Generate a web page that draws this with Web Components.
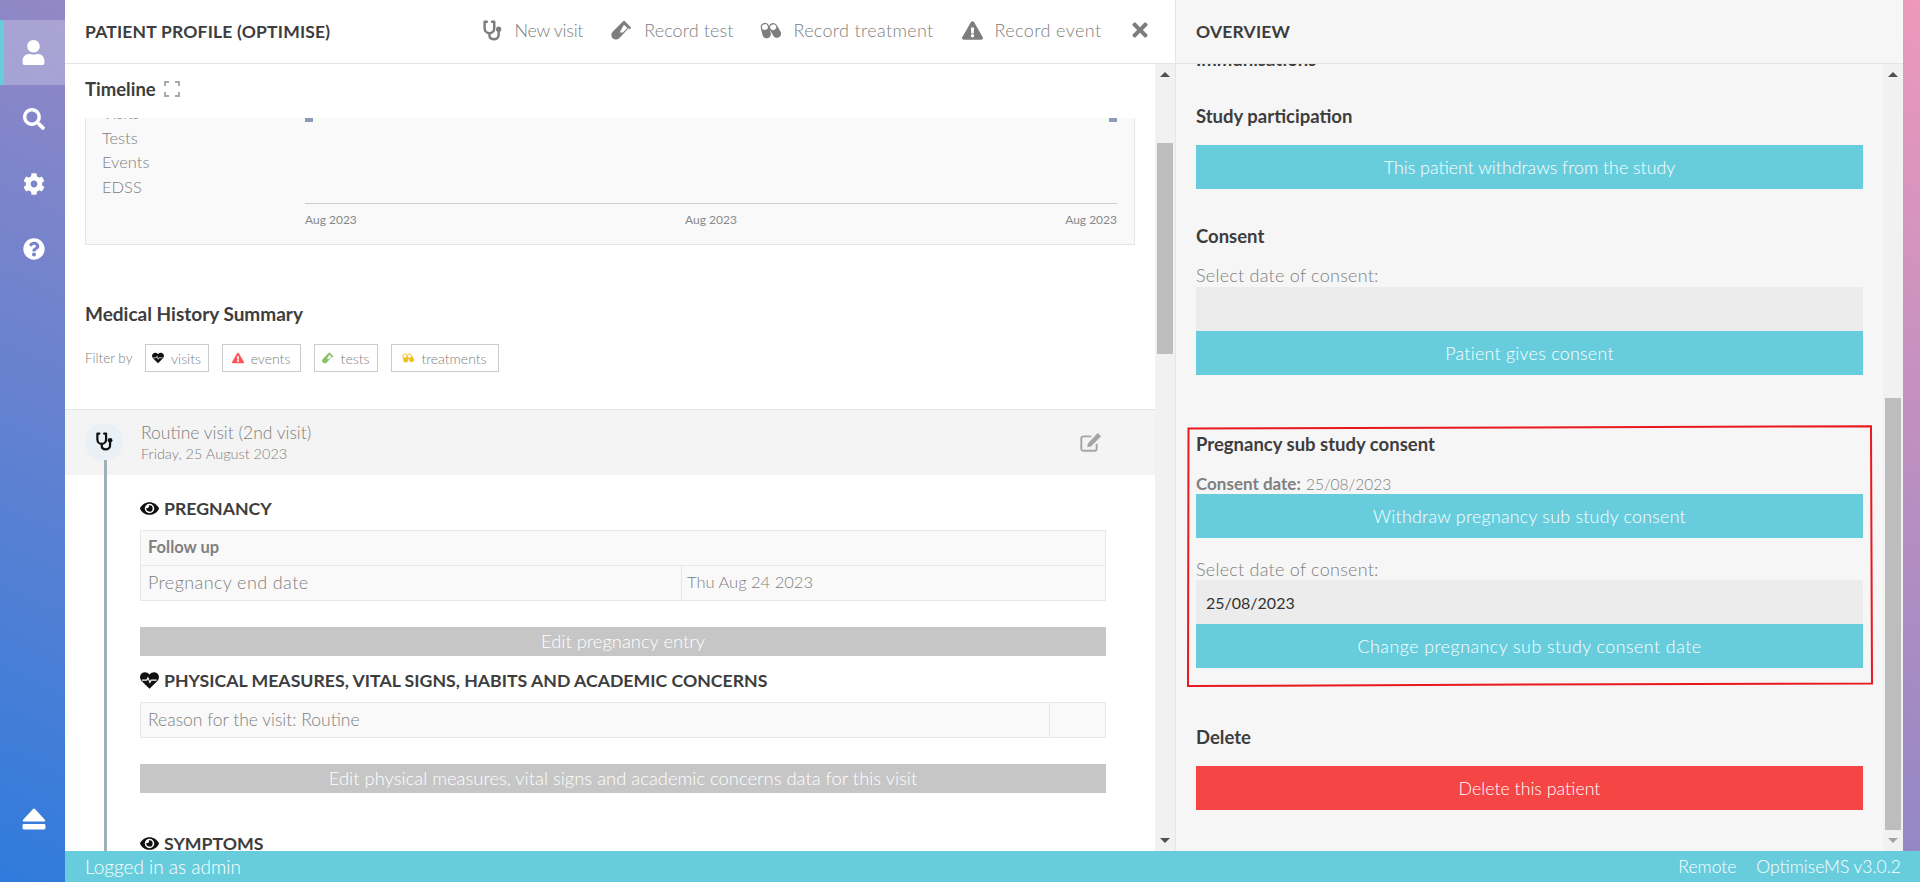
<!DOCTYPE html>
<html>
<head>
<meta charset="utf-8">
<title>Patient profile</title>
<style>
  html, body { margin: 0; height: 882px; overflow: hidden; }
  body {
    font-family: "Lato", "Open Sans", sans-serif;
    font-size: 15px;
    font-weight: 300;
    color: #808080;
    background: linear-gradient(to top right, #2f7bdc, #9087c6 50%, #ee98bb);
  }
  #app { display: grid; grid-template-columns: 65px 1fr; grid-template-rows: 851px 31px; height: 882px; }
  opt-sidebar { grid-row: 1 / 3; }
  #panels { display: flex; min-height: 0; }
  opt-status-bar { grid-column: 2; }
</style>
</head>
<body>
<div id="app">
  <opt-sidebar></opt-sidebar>
  <div id="panels">
    <opt-patient-panel></opt-patient-panel>
    <opt-overview-panel></opt-overview-panel>
  </div>
  <opt-status-bar></opt-status-bar>
</div>

<script>
const ICONS = {
  user: ['0 0 448 512', '<path d="M224 256c70.7 0 128-57.3 128-128S294.7 0 224 0 96 57.3 96 128s57.3 128 128 128zm89.6 32h-16.7c-22.2 10.2-46.9 16-72.9 16s-50.6-5.8-72.9-16h-16.7C60.2 288 0 348.2 0 422.4V464c0 26.5 21.5 48 48 48h352c26.5 0 48-21.5 48-48v-41.6c0-74.2-60.2-134.4-134.4-134.4z"/>'],
  search: ['0 0 512 512', '<path d="M505 442.7L405.3 343c-4.5-4.5-10.6-7-17-7H372c27.6-35.3 44-79.7 44-128C416 93.1 322.9 0 208 0S0 93.1 0 208s93.1 208 208 208c48.3 0 92.7-16.4 128-44v16.3c0 6.4 2.5 12.5 7 17l99.7 99.7c9.4 9.4 24.6 9.4 33.9 0l28.3-28.3c9.4-9.4 9.4-24.6.1-34zM208 336c-70.7 0-128-57.2-128-128 0-70.7 57.2-128 128-128 70.7 0 128 57.2 128 128 0 70.7-57.2 128-128 128z"/>'],
  cog: ['0 0 512 512', '<path d="M487.4 315.7l-42.6-24.6c4.3-23.2 4.3-47 0-70.2l42.6-24.6c4.9-2.8 7.1-8.6 5.5-14-11.1-35.6-30-67.8-54.7-94.6-3.8-4.1-10-5.1-14.8-2.3L380.8 110c-17.9-15.4-38.5-27.3-60.8-35.1V25.8c0-5.6-3.9-10.5-9.4-11.7-36.7-8.2-74.3-7.8-109.2 0-5.5 1.2-9.4 6.1-9.4 11.7V75c-22.2 7.9-42.8 19.8-60.8 35.1L88.7 85.5c-4.9-2.8-11-1.9-14.8 2.3-24.7 26.7-43.6 58.9-54.7 94.6-1.7 5.4.6 11.2 5.5 14L67.3 221c-4.3 23.2-4.3 47 0 70.2l-42.6 24.6c-4.9 2.8-7.1 8.6-5.5 14 11.1 35.6 30 67.8 54.7 94.6 3.8 4.1 10 5.1 14.8 2.3l42.6-24.6c17.9 15.4 38.5 27.3 60.8 35.1v49.2c0 5.6 3.9 10.5 9.4 11.7 36.7 8.2 74.3 7.8 109.2 0 5.5-1.2 9.4-6.1 9.4-11.7v-49.2c22.2-7.9 42.8-19.8 60.8-35.1l42.6 24.6c4.9 2.8 11 1.9 14.8-2.3 24.7-26.7 43.6-58.9 54.7-94.6 1.5-5.5-.7-11.3-5.6-14.1zM256 336c-44.1 0-80-35.9-80-80s35.9-80 80-80 80 35.9 80 80-35.9 80-80 80z"/>'],
  question: ['0 0 512 512', '<path d="M504 256c0 136.997-111.043 248-248 248S8 392.997 8 256C8 119.083 119.043 8 256 8s248 111.083 248 248zM262.655 90c-54.497 0-89.255 22.957-116.549 63.758-3.536 5.286-2.353 12.415 2.715 16.258l34.699 26.31c5.205 3.947 12.621 3.008 16.665-2.122 17.864-22.658 30.113-35.797 57.303-35.797 20.429 0 45.698 13.148 45.698 32.958 0 14.976-12.363 22.667-32.534 33.976C247.128 238.528 216 254.941 216 296v4c0 6.627 5.373 12 12 12h56c6.627 0 12-5.373 12-12v-1.333c0-28.462 83.186-29.647 83.186-106.667 0-58.002-60.165-102-116.531-102zM256 338c-25.365 0-46 20.635-46 46 0 25.364 20.635 46 46 46s46-20.636 46-46c0-25.365-20.635-46-46-46z"/>'],
  eject: ['0 0 448 448', '<path d="M224 30c9 0 17 4 23 11l180 196c12 14 3 35-16 35H37c-19 0-28-21-16-35L201 41c6-7 14-11 23-11z"/><rect x="10" y="318" width="428" height="100" rx="26"/>'],
  times: ['0 0 352 512', '<path d="M242.72 256l100.07-100.07c12.28-12.28 12.28-32.19 0-44.48l-22.24-22.24c-12.28-12.28-32.19-12.28-44.48 0L176 189.28 75.93 89.21c-12.28-12.28-32.19-12.28-44.48 0L9.21 111.45c-12.28 12.28-12.28 32.19 0 44.48L109.28 256 9.21 356.07c-12.28 12.28-12.28 32.19 0 44.48l22.24 22.24c12.28 12.28 32.2 12.28 44.48 0L176 322.72l100.07 100.07c12.28 12.28 32.2 12.28 44.48 0l22.24-22.24c12.28-12.28 12.28-32.19 0-44.48L242.72 256z"/>'],
  warning: ['0 0 576 512', '<path d="M569.517 440.013C587.975 472.007 564.806 512 527.94 512H48.054c-36.937 0-59.999-40.055-41.577-71.987L246.423 23.985c18.467-32.009 64.72-31.951 83.154 0l239.94 416.028zM288 354c-25.405 0-46 20.595-46 46s20.595 46 46 46 46-20.595 46-46-20.595-46-46-46zm-43.673-165.346l7.418 136c.347 6.364 5.609 11.346 11.982 11.346h48.546c6.373 0 11.635-4.982 11.982-11.346l7.418-136c.375-6.874-5.098-12.654-11.982-12.654h-63.383c-6.884 0-12.356 5.78-11.981 12.654z"/>'],
  eye: ['0 0 576 512', '<path d="M572.52 241.4C518.29 135.59 410.93 64 288 64S57.68 135.64 3.48 241.41a32.35 32.35 0 0 0 0 29.19C57.71 376.41 165.07 448 288 448s230.32-71.64 284.52-177.41a32.35 32.35 0 0 0 0-29.19zM288 400a144 144 0 1 1 144-144 143.93 143.93 0 0 1-144 144zm0-240a95.31 95.31 0 0 0-25.31 3.79 47.85 47.85 0 0 1-66.9 66.9A95.78 95.78 0 1 0 288 160z"/>'],
  stethoscope: ['0 0 24 24', '<path fill="none" stroke="currentColor" stroke-width="2.8" stroke-linecap="round" stroke-linejoin="round" d="M5.500 2H3v7c0 3.500 2.500 6 5.500 6s5.500-2.500 5.500-6V2h-2.500"/><path fill="none" stroke="currentColor" stroke-width="2.800" stroke-linecap="round" d="M8.500 15v2.500c0 2.800 2.200 4.500 5 4.500s5.500-1.700 5.500-4.500V13"/><circle cx="19" cy="10.500" r="3"/>'],
  vial: ['0 0 24 24', '<path d="M15.200 .8l8 8-1.700 1.700-1.400-1.200L9.400 20.800a5.300 5.300 0 0 1-7.500-7.500L13 2.200l-.2-.2z"/><path fill="#fff" d="M14.800 5.300l3.900 3.900-5 5H9.900z"/>'],
  pills: ['0 0 24 20', '<g transform="rotate(-14 7 10)"><rect x="1.800" y="1" width="9.600" height="18" rx="4.800"/><rect x="3.200" y="2.600" width="6.800" height="6.400" rx="3" fill="#fff"/></g><g transform="rotate(-30 17 10)"><rect x="12.400" y="1" width="9.600" height="18" rx="4.800"/><rect x="13.800" y="2.600" width="6.800" height="6.400" rx="3" fill="#fff"/></g>'],
  heartbeat: ['0 0 24 22', '<path d="M12 21.500L2 11.500C-.8 8.500-.5 4 2.500 1.800c2.800-2 6.800-1.500 9.500 1.700 2.700-3.200 6.700-3.700 9.500-1.700 3 2.200 3.300 6.700.5 9.700z"/><path fill="none" stroke="#fff" stroke-width="1.400" d="M2.500 10.500h6l1.500-3 2.500 6 1.500-3h7"/>'],
  edit: ['0 0 24 22', '<path fill="none" stroke="currentColor" stroke-width="2.200" d="M19 12.500V18a2.500 2.500 0 0 1-2.500 2.500H4A2.500 2.500 0 0 1 1.500 18V6.500A2.500 2.500 0 0 1 4 4h9"/><path d="M21 .8l2.400 2.400a1 1 0 0 1 0 1.400L12.500 15.500l-4.300.8.800-4.300L19.600.8a1 1 0 0 1 1.400 0z"/>'],
  expand: ['0 0 16 16', '<path fill="none" stroke="currentColor" stroke-width="2" d="M1 5V1h4M11 1h4v4M15 11v4h-4M5 15H1v-4"/>']
};

function svgIcon(name, size, color) {
  const [box, body] = ICONS[name];
  return `<svg viewBox="${box}" width="${size}" height="${size}" fill="currentColor" style="color:${color};display:block;flex:none">${body}</svg>`;
}

class OptSidebar extends HTMLElement {
  constructor() {
    super();
    this.attachShadow({mode: "open"}).innerHTML = `
    <style>
      :host { display: flex; flex-direction: column; height: 882px; padding-top: 20px; box-sizing: border-box; }
      .item { height: 65px; display: flex; align-items: center; justify-content: center; padding-left: 2px; }
      .on { background: rgba(255,255,255,.24); box-shadow: inset 4px 0 0 #67cddd; margin-bottom: 1.500px; }
      .push { margin-top: auto; margin-bottom: 31px; height: 65px; }
    </style>
    <div class="item on">${svgIcon("user", 25, "#fff")}</div>
    <div class="item">${svgIcon("search", 22, "#fff")}</div>
    <div class="item">${svgIcon("cog", 22, "#fff")}</div>
    <div class="item">${svgIcon("question", 22, "#fff")}</div>
    <div class="item push">${svgIcon("eject", 24, "#fff")}</div>`;
  }
}

class OptPanelHead extends HTMLElement {
  constructor() {
    super();
    this.attachShadow({mode: "open"}).innerHTML = `
    <style>
      :host { display: flex; align-items: center; height: 63px; flex: none; border-bottom: 1px solid #e5e5e5; padding-left: 20px; }
      .t { font-size: 17.500px; font-weight: 700; color: #3d3d3d; letter-spacing: .2px; }
      .r { margin-left: auto; margin-bottom: 3px; display: flex; align-items: center; }
    </style>
    <div class="t"><slot name="title"></slot></div>
    <div class="r"><slot></slot></div>`;
  }
}

class OptAction extends HTMLElement {
  constructor() {
    super();
    const icon = this.getAttribute("icon");
    const size = this.getAttribute("size") || 21;
    this.attachShadow({mode: "open"}).innerHTML = `
    <style>
      :host { display: flex; align-items: center; gap: 12px; margin-left: 28px; font-size: 18px; color: #808080; }
    </style>
    ${svgIcon(icon, size, "#7d7d7d")}<span><slot></slot></span>`;
  }
}

class OptScrollTrack extends HTMLElement {
  constructor() {
    super();
    const top = this.getAttribute("top");
    const height = this.getAttribute("thumb");
    const fade = this.hasAttribute("fade");
    this.attachShadow({mode: "open"}).innerHTML = `
    <style>
      :host { display: flex; flex-direction: column; width: 20px; flex: none; background: #f1f1f1; position: relative; box-sizing: border-box; padding: 0 2px; }
      .up, .down { position: absolute; left: 5px; width: 0; height: 0; border-left: 5px solid transparent; border-right: 5px solid transparent; }
      .up { top: 8px; border-bottom: 5px solid #505050; }
      .down { bottom: 8px; border-top: 5px solid ${fade ? "#a3a3a3" : "#505050"}; }
      .thumb { background: #bdbdbd; height: ${height}px; margin-top: ${top}px; }
    </style>
    <div class="up"></div><div class="thumb"></div><div class="down"></div>`;
  }
}

class OptTimeline extends HTMLElement {
  constructor() {
    super();
    this.attachShadow({mode: "open"}).innerHTML = `
    <style>
      :host { display: grid; grid-template-columns: 219px 1fr; height: 127px; box-sizing: border-box; background: #f9f9f9; margin-right: 20px;
        border: solid #e5e5e5; border-width: 0 1px 1px 1px; overflow: hidden; }
      .labels { padding-left: 16px; margin-top: -17px; font-size: 16.500px; line-height: 24.500px; color: #808080; }
      .plot { position: relative; margin-right: 17px; display: flex; flex-direction: column; }
      .marks { display: flex; justify-content: space-between; height: 85px; border-bottom: 1px solid #ccc; }
      .marks i { width: 8px; height: 4px; background: #8c9bb5; }
      .axis { display: flex; justify-content: space-between; font-size: 12px; font-weight: 400; color: #888; margin-top: 8px; }
    </style>
    <div class="labels"><div>Visits</div><div>Tests</div><div>Events</div><div>EDSS</div></div>
    <div class="plot">
      <div class="marks"><i></i><i></i></div>
      <div class="axis"><span>Aug 2023</span><span>Aug 2023</span><span>Aug 2023</span></div>
    </div>`;
  }
}

class OptFilterChip extends HTMLElement {
  constructor() {
    super();
    const icon = this.getAttribute("icon");
    const color = this.getAttribute("color");
    this.attachShadow({mode: "open"}).innerHTML = `
    <style>
      :host { display: flex; align-items: center; justify-content: center; height: 28px; box-sizing: border-box; border: 1px solid #ccc; gap: 7px; font-size: 14px; color: #808080; }
    </style>
    ${svgIcon(icon, 12, color)}<span><slot></slot></span>`;
  }
}

class OptSectionTitle extends HTMLElement {
  constructor() {
    super();
    this.attachShadow({mode: "open"}).innerHTML = `
    <style>
      :host { display: flex; align-items: center; gap: 5px; height: 24px; font-size: 17.700px; font-weight: 700; color: #3d3d3d; }
    </style>
    ${svgIcon(this.getAttribute("icon"), 19, "#111")}<span><slot></slot></span>`;
  }
}

class OptDataRow extends HTMLElement {
  constructor() {
    super();
    const split = this.getAttribute("split");
    this.attachShadow({mode: "open"}).innerHTML = `
    <style>
      :host { display: grid; grid-template-columns: ${split ? split + "px 1fr" : "1fr"}; height: 36px; box-sizing: border-box; border: 1px solid #e8e8e8; background: #f9f9f9; font-size: 17.500px; color: #808080; }
      :host([bold]) { font-weight: 700; font-size: 16.500px; }
      :host([joined]) { border-top: 0; height: 35px; }
      div { display: flex; align-items: center; padding: 0 0 2px 7px; }
      div + div { border-left: 1px solid #e8e8e8; padding-left: 5px; }
    </style>
    <div><slot></slot></div>${split ? '<div><slot name="value"></slot></div>' : ""}`;
  }
}

class OptWideButton extends HTMLElement {
  constructor() {
    super();
    this.attachShadow({mode: "open"}).innerHTML = `
    <style>
      :host { display: flex; align-items: center; justify-content: center; height: 44px; background: #67cddd; color: #fff; font-size: 17.800px; padding-bottom: 1px; box-sizing: border-box; }
      :host([danger]) { background: #f54545; }
      :host([muted]) { background: #c6c6c6; height: 29px; font-size: 18.400px; padding-bottom: 2px; }
    </style>
    <slot></slot>`;
  }
}

class OptVisitRow extends HTMLElement {
  constructor() {
    super();
    this.attachShadow({mode: "open"}).innerHTML = `
    <style>
      :host { display: flex; align-items: center; height: 66px; box-sizing: border-box; border-top: 1px solid #e5e5e5; background: #f4f4f4; padding-left: 20px; flex: none; }
      .node { width: 38px; height: 38px; border-radius: 50%; background: #e9f0f6; display: flex; align-items: center; justify-content: center; position: relative; margin: -2px 18px 0 0; }
      .node::after { content: ""; position: absolute; left: 19px; top: 37px; width: 3px; height: 20px; background: #a0b0bb; }
      .name { font-size: 17.500px; line-height: 20px; color: #808080; }
      .date { font-size: 14.500px; line-height: 18px; color: #808080; margin-top: 2px; }
      .edit { margin: 0 54px 0 auto; }
    </style>
    <div class="node">${svgIcon("stethoscope", 19, "#111")}</div>
    <div><div class="name"><slot></slot></div><div class="date"><slot name="date"></slot></div></div>
    <div class="edit">${svgIcon("edit", 21, "#a5a5a5")}</div>`;
  }
}

class OptPatientPanel extends HTMLElement {
  constructor() {
    super();
    this.attachShadow({mode: "open"}).innerHTML = `
    <style>
      :host { display: flex; flex-direction: column; width: 1111px; flex: none; background: #fff; box-sizing: border-box; border-right: 1px solid #e5e5e5; min-height: 0; }
      .below { display: flex; flex: 1; min-height: 0; }
      .scroll { flex: 1; min-width: 0; display: flex; flex-direction: column; overflow: hidden; }
      .stick { display: flex; align-items: center; gap: 8px; height: 54px; padding: 0 0 4px 20px; box-sizing: border-box; flex: none; font-size: 18.500px; font-weight: 700; color: #3d3d3d; }
      opt-timeline { margin-left: 20px; flex: none; }
      h3 { margin: 57px 0 0 20px; font-size: 19px; line-height: 24px; font-weight: 700; color: #3d3d3d; }
      .filters { display: flex; align-items: center; gap: 13px; height: 28px; margin: 18px 0 37px 20px; color: #808080; }
      .filters span { width: 46.500px; font-size: 13.500px; white-space: nowrap; }
      .body { flex: 1; display: flex; min-height: 0; overflow: hidden; }
      .rail { width: 3px; background: #a0b0bb; margin-left: 39px; flex: none; }
      .content { width: 966px; margin-left: 33px; padding-top: 21px; flex: none; }
      .d { font-size: 16.500px; }
      .wide { font-size: 18px; letter-spacing: .4px; }
    </style>
    <opt-panel-head>
      <span slot="title">PATIENT PROFILE (OPTIMISE)</span>
      <opt-action icon="stethoscope" style="letter-spacing:-.3px">New visit</opt-action>
      <opt-action icon="vial" style="letter-spacing:.1px">Record test</opt-action>
      <opt-action icon="pills" style="letter-spacing:.33px;margin-left:27px">Record treatment</opt-action>
      <opt-action icon="warning" style="letter-spacing:.4px">Record event</opt-action>
      <opt-action icon="times" size="22" style="margin:0 24.500px 0 27px;gap:0"></opt-action>
    </opt-panel-head>
    <div class="below">
      <div class="scroll">
        <div class="stick">Timeline ${svgIcon("expand", 16, "#aaa")}</div>
        <opt-timeline></opt-timeline>
        <h3>Medical History Summary</h3>
        <div class="filters">
          <span>Filter by</span>
          <opt-filter-chip icon="heartbeat" color="#111" style="width:64px">visits</opt-filter-chip>
          <opt-filter-chip icon="warning" color="#f55" style="width:79px">events</opt-filter-chip>
          <opt-filter-chip icon="vial" color="#8bc06b" style="width:64px">tests</opt-filter-chip>
          <opt-filter-chip icon="pills" color="#f6bd16" style="width:108px">treatments</opt-filter-chip>
        </div>
        <opt-visit-row>Routine visit (2nd visit)<span slot="date">Friday, 25 August 2023</span></opt-visit-row>
        <div class="body">
          <div class="rail"></div>
          <div class="content">
            <opt-section-title icon="eye">PREGNANCY</opt-section-title>
            <opt-data-row bold style="margin-top:10px">Follow up</opt-data-row>
            <opt-data-row joined split="540"><span class="wide">Pregnancy end date</span><span slot="value" class="d">Thu Aug 24 2023</span></opt-data-row>
            <opt-wide-button muted style="margin-top:26px">Edit pregnancy entry</opt-wide-button>
            <opt-section-title icon="heartbeat" style="margin-top:12px">PHYSICAL MEASURES, VITAL SIGNS, HABITS AND ACADEMIC CONCERNS</opt-section-title>
            <opt-data-row split="908" style="margin-top:10px">Reason for the visit: Routine<span slot="value"></span></opt-data-row>
            <opt-wide-button muted style="margin-top:26px">Edit physical measures, vital signs and academic concerns data for this visit</opt-wide-button>
            <opt-section-title icon="eye" style="margin-top:38px">SYMPTOMS</opt-section-title>
          </div>
        </div>
      </div>
      <opt-scroll-track top="79" thumb="211"></opt-scroll-track>
    </div>`;
  }
}

class OptAnnotation extends HTMLElement {
  constructor() {
    super();
    this.attachShadow({mode: "open"}).innerHTML = `
    <style>
      :host { position: absolute; left: 10px; top: 360px; width: 690px; height: 266px; pointer-events: none; }
      svg { display: block; }
    </style>
    <svg width="690" height="266" viewBox="0 0 690 266">
      <path d="M2.500 4.500L340 3.500L685 2.200L686 259.500L340 260.500L2 262z" fill="none" stroke="#e8191f" stroke-width="2"/>
    </svg>`;
  }
}

class OptOverviewPanel extends HTMLElement {
  constructor() {
    super();
    this.attachShadow({mode: "open"}).innerHTML = `
    <style>
      :host { display: flex; flex-direction: column; width: 727px; flex: none; background: #f6f6f6; min-height: 0; }
      .below { display: flex; flex: 1; min-height: 0; }
      .scroll { flex: 1; min-width: 0; padding: 0 20px; overflow: hidden; position: relative; }
      .inner { margin-top: -16px; }
      h4 { margin: 0; font-size: 18.500px; line-height: 22px; padding-bottom: 2px; font-weight: 700; color: #3d3d3d; }
      .line { font-size: 18px; line-height: 20px; height: 20px; color: #808080; letter-spacing: .25px; }
      .line b { font-size: 17px; font-weight: 700; letter-spacing: 0; }
      .line span { font-size: 15.500px; letter-spacing: 0; }
      .field { height: 44px; background: #ececec; display: flex; align-items: center; padding-left: 10px; font-size: 16px; font-weight: 400; color: #333; }
    </style>
    <opt-panel-head><span slot="title">OVERVIEW</span></opt-panel-head>
    <div class="below">
      <div class="scroll">
        <div class="inner">
          <h4>Immunisations</h4>
          <h4 style="margin-top:33px">Study participation</h4>
          <opt-wide-button style="margin-top:16px">This patient withdraws from the study</opt-wide-button>
          <h4 style="margin-top:36px">Consent</h4>
          <div class="line" style="margin-top:16px">Select date of consent:</div>
          <div class="field" style="margin-top:2px"></div>
          <opt-wide-button style="letter-spacing:.3px">Patient gives consent</opt-wide-button>
          <h4 style="margin-top:58px">Pregnancy sub study consent</h4>
          <div class="line" style="margin-top:16px"><b>Consent date:</b> <span>25/08/2023</span></div>
          <opt-wide-button style="margin-top:1px;letter-spacing:.27px">Withdraw pregnancy sub study consent</opt-wide-button>
          <div class="line" style="margin-top:21px">Select date of consent:</div>
          <div class="field" style="margin-top:1px">25/08/2023</div>
          <opt-wide-button style="letter-spacing:.5px">Change pregnancy sub study consent date</opt-wide-button>
          <h4 style="margin-top:58px">Delete</h4>
          <opt-wide-button danger style="margin-top:16px">Delete this patient</opt-wide-button>
        </div>
        <opt-annotation></opt-annotation>
      </div>
      <opt-scroll-track top="334" thumb="432" fade></opt-scroll-track>
    </div>`;
  }
}

class OptStatusBar extends HTMLElement {
  constructor() {
    super();
    this.attachShadow({mode: "open"}).innerHTML = `
    <style>
      :host { display: flex; align-items: center; background: #67cddd; color: #fff; font-size: 17.500px; padding: 0 19px 0 20px; }
      .r { margin-left: auto; display: flex; gap: 20px; }
    </style>
    <span style="font-size:19px">Logged in as admin</span>
    <div class="r"><span>Remote</span><span>OptimiseMS v3.0.2</span></div>`;
  }
}

customElements.define("opt-sidebar", OptSidebar);
customElements.define("opt-panel-head", OptPanelHead);
customElements.define("opt-action", OptAction);
customElements.define("opt-scroll-track", OptScrollTrack);
customElements.define("opt-timeline", OptTimeline);
customElements.define("opt-filter-chip", OptFilterChip);
customElements.define("opt-section-title", OptSectionTitle);
customElements.define("opt-data-row", OptDataRow);
customElements.define("opt-wide-button", OptWideButton);
customElements.define("opt-visit-row", OptVisitRow);
customElements.define("opt-patient-panel", OptPatientPanel);
customElements.define("opt-annotation", OptAnnotation);
customElements.define("opt-overview-panel", OptOverviewPanel);
customElements.define("opt-status-bar", OptStatusBar);
</script>
</body>
</html>
